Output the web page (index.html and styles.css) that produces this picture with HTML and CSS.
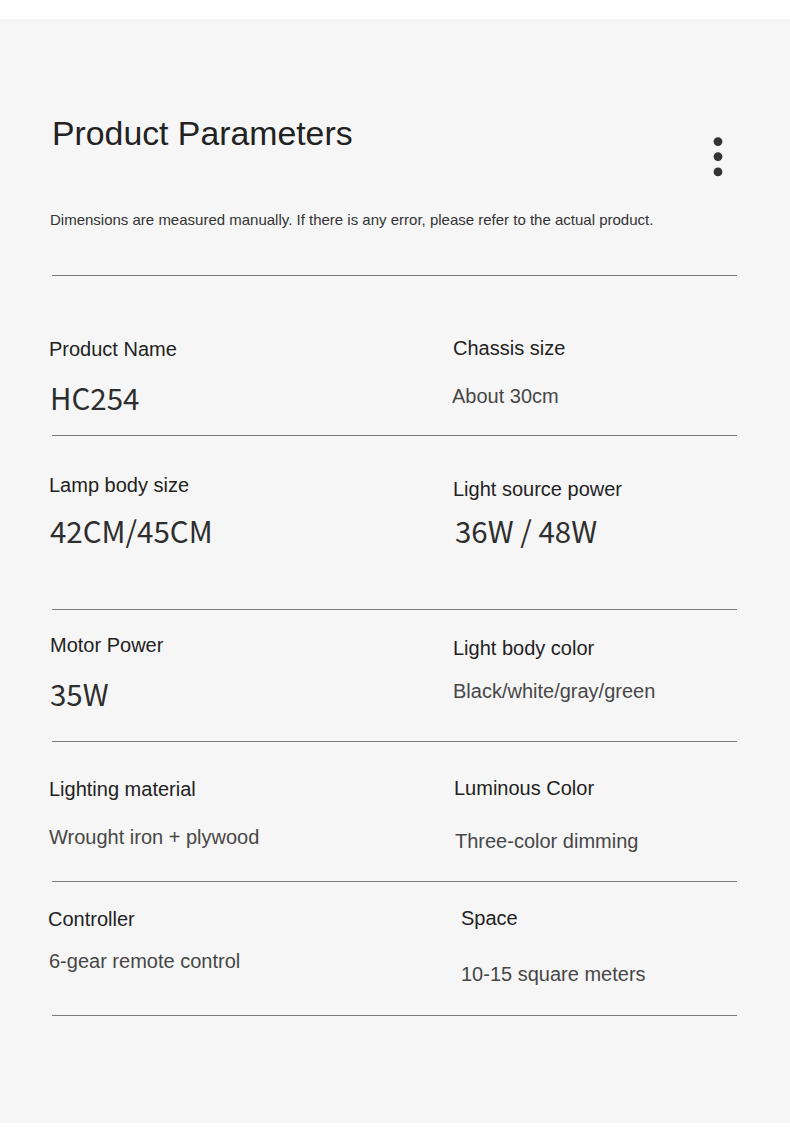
FILE: index.html
```html
<!DOCTYPE html>
<html lang="en">
<head>
<meta charset="utf-8">
<title>Product Parameters</title>
<link rel="stylesheet" href="styles.css">
</head>
<body>
<div class="sheet">
  <header class="head">
    <div class="head-row">
      <h1 class="title">Product Parameters</h1>
      <svg class="dots" width="10" height="40" viewBox="0 0 10 40" aria-hidden="true">
        <circle cx="5" cy="4.6" r="4.4" fill="#333"/>
        <circle cx="5" cy="19.6" r="4.4" fill="#333"/>
        <circle cx="5" cy="34.9" r="4.4" fill="#333"/>
      </svg>
    </div>
    <p class="subtitle">Dimensions are measured manually. If there is any error, please refer to the actual product.</p>
  </header>

  <div class="params">
    <div class="rule"></div>

    <div class="row r1">
      <div class="cell c1l"><div class="label">Product Name</div><div class="value big">HC254</div></div>
      <div class="cell c1r"><div class="label">Chassis size</div><div class="value">About 30cm</div></div>
    </div>
    <div class="rule"></div>

    <div class="row r2">
      <div class="cell c2l"><div class="label">Lamp body size</div><div class="value big">42CM/45CM</div></div>
      <div class="cell c2r"><div class="label">Light source power</div><div class="value big">36W / 48W</div></div>
    </div>
    <div class="rule"></div>

    <div class="row r3">
      <div class="cell c3l"><div class="label">Motor Power</div><div class="value big">35W</div></div>
      <div class="cell c3r"><div class="label">Light body color</div><div class="value">Black/white/gray/green</div></div>
    </div>
    <div class="rule"></div>

    <div class="row r4">
      <div class="cell c4l"><div class="label">Lighting material</div><div class="value">Wrought iron + plywood</div></div>
      <div class="cell c4r"><div class="label">Luminous Color</div><div class="value">Three-color dimming</div></div>
    </div>
    <div class="rule"></div>

    <div class="row r5">
      <div class="cell c5l"><div class="label">Controller</div><div class="value">6-gear remote control</div></div>
      <div class="cell c5r"><div class="label">Space</div><div class="value">10-15 square meters</div></div>
    </div>
    <div class="rule"></div>
  </div>
</div>
</body>
</html>
```

FILE: styles.css
```css
* { box-sizing: border-box; }

html, body {
  margin: 0;
  padding: 0;
  background: #ffffff;
}

body {
  font-family: "Liberation Sans", Arial, sans-serif;
  color: #222;
}

.sheet {
  margin-top: 19px;
  height: 1104px;
  background: #f6f6f6;
  overflow: hidden;
}

.head {
  padding: 94px 0 0 0;
}

.head-row {
  display: flex;
  justify-content: space-between;
  align-items: flex-start;
  padding: 0 67px 0 52px;
}

.title {
  margin: 0;
  font-size: 33.8px;
  line-height: 40px;
  font-weight: normal;
  color: #222;
}

.dots {
  display: block;
  margin-top: 24px;
}

.subtitle {
  margin: 33px 0 0 50px;
  font-size: 15px;
  line-height: 20px;
  color: #333;
}

.params {
  margin: 45px 53px 0 49px;
}

.rule {
  height: 1px;
  margin-left: 3px;
  background: #7a7a7a;
}

.row {
  display: grid;
  grid-template-columns: 404px 1fr;
}

.r1 { height: 159px; }
.r2 { height: 173px; }
.r3 { height: 131px; }
.r4 { height: 139px; }
.r5 { height: 133px; }

.cell {
  display: flex;
  flex-direction: column;
  align-items: flex-start;
}

.label {
  font-size: 20px;
  line-height: 24px;
  color: #222;
}

.value {
  font-size: 20px;
  line-height: 24px;
  color: #474747;
}

.value.big {
  font-family: "Noto Sans CJK SC", "Noto Sans", sans-serif;
  font-size: 29.5px;
  line-height: 36px;
  color: #2e2e2e;
}

/* per-cell vertical placement */
.c1l { padding-top: 61px; gap: 18px; }
.c1l .value { margin-left: 1px; }
.c1r { padding-top: 60px; gap: 24px; }
.c1r .value { margin-left: -1px; }

.c2l { padding-top: 37px; gap: 15px; }
.c2l .value { margin-left: 1px; }
.c2r { padding-top: 41px; gap: 11px; }
.c2r .value { margin-left: 2px; }

.c3l { padding-top: 23px; gap: 18px; padding-left: 1px; }
.c3r { padding-top: 26px; gap: 19px; }

.c4l { padding-top: 35px; gap: 24px; }
.c4r { padding-top: 34px; gap: 29px; padding-left: 1px; }
.c4r .value { margin-left: 1px; }

.c5l { padding-top: 25px; gap: 18px; padding-left: 0; }
.c5l .label { margin-left: -1px; }
.c5r { padding-top: 24px; gap: 32px; padding-left: 8px; }
```
